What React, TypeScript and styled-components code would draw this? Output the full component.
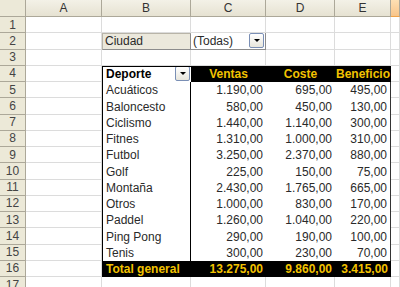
import React from "react";
import styled, { createGlobalStyle, css } from "styled-components";

const GlobalStyle = createGlobalStyle`
  body {
    margin: 0;
    background: #fff;
    font-family: "Liberation Sans", Arial, sans-serif;
  }
`;

const GRID = "#dcdcdc";
const HEAD_LINE = "#aca899";
const GOLD = "#f2c200";

type Kind =
  | "plain"
  | "label"
  | "filter"
  | "field"
  | "head"
  | "rowLabel"
  | "value"
  | "valueLast"
  | "total"
  | "totalLabel";

const kinds: Record<Kind, ReturnType<typeof css>> = {
  plain: css``,
  label: css`
    background: #ebe8dc;
    border: 1px solid #8c8c8c;
    border-left-color: #b8b4a8;
    border-top-color: #b8b4a8;
    color: #2a2a2a;
  `,
  filter: css`
    border-bottom: 1px solid #8c8c8c;
    border-right: 1px solid #8c8c8c;
    color: #2a2a2a;
  `,
  field: css`
    border-top: 1px solid #000;
    border-left: 1px solid #000;
    border-right: none;
    border-bottom: none;
    font-weight: 700;
    color: #000;
    padding-left: 3px;
  `,
  head: css`
    background: #000;
    border: none;
    color: ${GOLD};
    font-weight: 700;
    justify-content: center;
  `,
  rowLabel: css`
    border-left: 1px solid #000;
    border-right: 1px solid #000;
    border-bottom: none;
    color: #2a2a2a;
    padding-left: 3px;
  `,
  value: css`
    border: none;
    color: #2a2a2a;
    justify-content: flex-end;
    padding-right: 3px;
  `,
  valueLast: css`
    border: none;
    border-right: 1px solid #333;
    color: #2a2a2a;
    justify-content: flex-end;
    padding-right: 3px;
  `,
  total: css`
    background: #000;
    border: none;
    color: ${GOLD};
    font-weight: 700;
    justify-content: flex-end;
    padding-right: 3px;
  `,
  totalLabel: css`
    background: #000;
    border: none;
    color: ${GOLD};
    font-weight: 700;
    padding-left: 4px;
  `,
};

const Sheet = styled.div`
  display: grid;
  grid-template-columns: 26px 76px 89px 75px 69px 56px 9px;
  grid-template-rows: 17px repeat(17, 16.25px);
  width: 400px;
  height: 287px;
  overflow: hidden;
  font-size: 12px;
`;

const Corner = styled.div`
  background: #ece9d8;
  border-right: 1px solid ${HEAD_LINE};
  border-bottom: 1px solid ${HEAD_LINE};
  box-sizing: border-box;
`;

const ColHead = styled.div<{ $active?: boolean }>`
  box-sizing: border-box;
  display: flex;
  align-items: center;
  justify-content: center;
  overflow: hidden;
  background: ${(p) =>
    p.$active
      ? "linear-gradient(#fde0b4, #f8c58a)"
      : "linear-gradient(#f3f1e7, #e6e2d2)"};
  border-right: 1px solid ${HEAD_LINE};
  border-bottom: 1px solid ${(p) => (p.$active ? "#f0a44a" : HEAD_LINE)};
  color: #333;
  font-size: 12px;
`;

const RowHead = styled.div`
  box-sizing: border-box;
  display: flex;
  align-items: center;
  justify-content: center;
  background: #ece9d8;
  border-right: 1px solid ${HEAD_LINE};
  border-bottom: 1px solid ${HEAD_LINE};
  color: #444;
  font-size: 12px;
`;

const Cell = styled.div<{ $kind: Kind }>`
  box-sizing: border-box;
  display: flex;
  align-items: flex-end;
  justify-content: flex-start;
  padding: 0 2px 1px 2px;
  border-right: 1px solid ${GRID};
  border-bottom: 1px solid ${GRID};
  white-space: nowrap;
  overflow: hidden;
  line-height: 14px;
  ${(p) => kinds[p.$kind]}
`;

const CellText = styled.span`
  flex: 1;
`;

const DropButton = styled.span`
  box-sizing: border-box;
  align-self: center;
  display: flex;
  align-items: center;
  justify-content: center;
  width: 15px;
  height: 15px;
  margin-right: -1px;
  border: 1px solid #7a8fb5;
  border-radius: 2px;
  background: linear-gradient(#ffffff, #e8e6dc);
  flex: none;
`;

const Arrow = styled.span`
  width: 0;
  height: 0;
  border-left: 3px solid transparent;
  border-right: 3px solid transparent;
  border-top: 3px solid #000;
`;

const sports: [string, string, string, string][] = [
  ["Acuáticos", "1.190,00", "695,00", "495,00"],
  ["Baloncesto", "580,00", "450,00", "130,00"],
  ["Ciclismo", "1.440,00", "1.140,00", "300,00"],
  ["Fitnes", "1.310,00", "1.000,00", "310,00"],
  ["Futbol", "3.250,00", "2.370,00", "880,00"],
  ["Golf", "225,00", "150,00", "75,00"],
  ["Montaña", "2.430,00", "1.765,00", "665,00"],
  ["Otros", "1.000,00", "830,00", "170,00"],
  ["Paddel", "1.260,00", "1.040,00", "220,00"],
  ["Ping Pong", "290,00", "190,00", "100,00"],
  ["Tenis", "300,00", "230,00", "70,00"],
];

type RowDef = { cells: [Kind, React.ReactNode][] };

const Drop = () => (
  <DropButton>
    <Arrow />
  </DropButton>
);

const plainRow = (): RowDef => ({
  cells: [
    ["plain", null],
    ["plain", null],
    ["plain", null],
    ["plain", null],
    ["plain", null],
    ["plain", null],
  ],
});

const rows: RowDef[] = [
  plainRow(),
  {
    cells: [
      ["plain", null],
      ["label", "Ciudad"],
      [
        "filter",
        <>
          <CellText>(Todas)</CellText>
          <Drop />
        </>,
      ],
      ["plain", null],
      ["plain", null],
      ["plain", null],
    ],
  },
  plainRow(),
  {
    cells: [
      ["plain", null],
      [
        "field",
        <>
          <CellText>Deporte</CellText>
          <Drop />
        </>,
      ],
      ["head", "Ventas"],
      ["head", "Coste"],
      ["head", "Beneficio"],
      ["plain", null],
    ],
  },
  ...sports.map(
    ([name, v, c, b]): RowDef => ({
      cells: [
        ["plain", null],
        ["rowLabel", name],
        ["value", v],
        ["value", c],
        ["valueLast", b],
        ["plain", null],
      ],
    })
  ),
  {
    cells: [
      ["plain", null],
      ["totalLabel", "Total general"],
      ["total", "13.275,00"],
      ["total", "9.860,00"],
      ["total", "3.415,00"],
      ["plain", null],
    ],
  },
  plainRow(),
];

// F is only a sliver at the right edge, its letter is out of view
const columns = ["A", "B", "C", "D", "E", ""];

export default function App() {
  return (
    <>
      <GlobalStyle />
      <Sheet>
        <Corner />
        {columns.map((c, i) => (
          <ColHead key={i} $active={i === 5}>
            {c}
          </ColHead>
        ))}
        {rows.map((row, i) => (
          <React.Fragment key={i}>
            <RowHead>{i + 1}</RowHead>
            {row.cells.map(([kind, content], j) => (
              <Cell key={j} $kind={kind}>
                {content}
              </Cell>
            ))}
          </React.Fragment>
        ))}
      </Sheet>
    </>
  );
}
